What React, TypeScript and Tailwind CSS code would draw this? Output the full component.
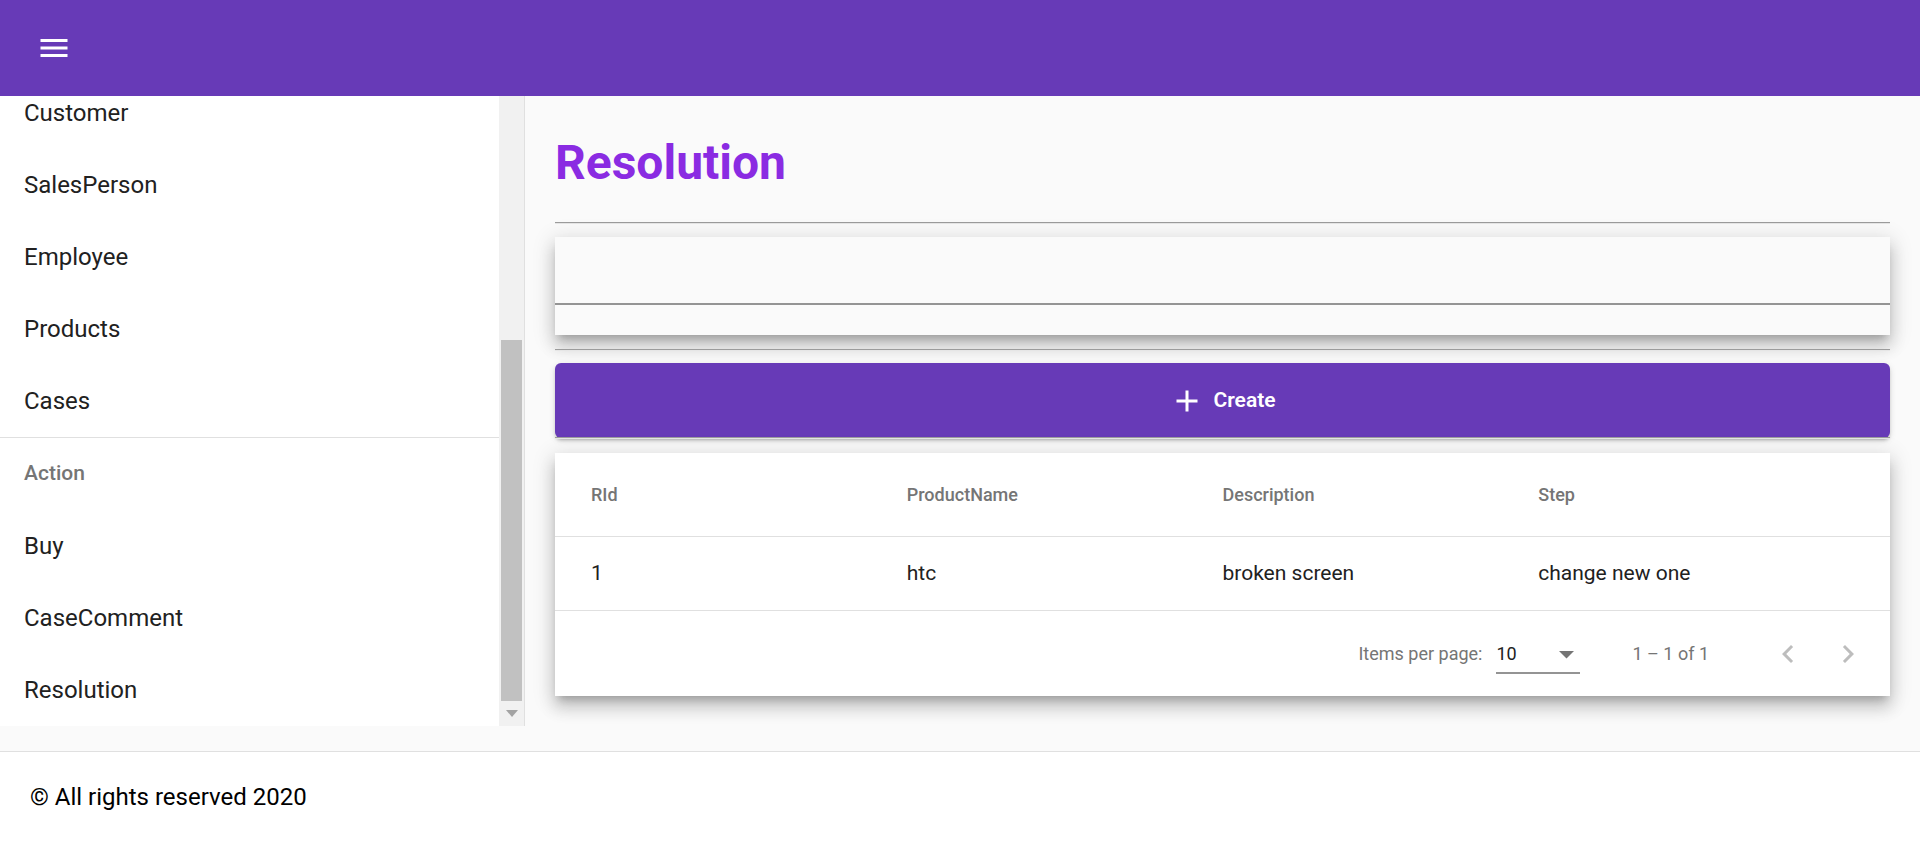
import React from "react";

const navTop = ["Customer", "SalesPerson", "Employee", "Products", "Cases"];
const navAction = ["Buy", "CaseComment", "Resolution"];

function Hr() {
  return <div className="h-[2px] border-t border-b border-t-[#9c9c9c] border-b-[#e6e6e6]" />;
}

export default function App() {
  return (
    <div className="w-[1920px] h-[841px] overflow-hidden bg-[#fafafa] flex flex-col" style={{ fontFamily: "Roboto, 'Noto Sans', sans-serif" }}>
      {/* Toolbar */}
      <div className="h-[96px] shrink-0 bg-[#673ab7] flex items-center pl-[36px]">
        <svg width="36" height="36" viewBox="0 0 24 24" fill="#ffffff">
          <path d="M3 18h18v-2H3v2zm0-5h18v-2H3v2zm0-7v2h18V6H3z" />
        </svg>
      </div>

      {/* Main */}
      <div className="h-[630px] shrink-0 flex">
        {/* Sidenav */}
        <div className="w-[525px] shrink-0 flex border-r border-[#e0e0e0] bg-white">
          <div className="w-[499px] overflow-hidden">
            <div className="-mt-[19px]">
              {navTop.map((t) => (
                <div key={t} className="h-[72px] flex items-center pl-[24px] text-[24px] text-[#212121]">
                  {t}
                </div>
              ))}
              <div className="border-t border-[#e0e0e0]" />
              <div className="h-[72px] flex items-center pl-[24px] text-[21px] font-medium text-[#757575]">Action</div>
              {navAction.map((t) => (
                <div key={t} className="h-[72px] flex items-center pl-[24px] text-[24px] text-[#212121]">
                  {t}
                </div>
              ))}
            </div>
          </div>
          {/* scrollbar */}
          <div className="w-[25px] bg-[#f1f1f1] flex flex-col">
            <div className="h-[244px]" />
            <div className="h-[361px] ml-[2px] w-[21px] bg-[#c1c1c1]" />
            <div className="flex-1 flex items-start justify-center pt-[9px]">
              <svg width="12" height="7" viewBox="0 0 12 7">
                <path d="M0 0h12L6 7z" fill="#a3a3a3" />
              </svg>
            </div>
          </div>
        </div>

        {/* Content */}
        <div className="flex-1 bg-[#fafafa] px-[30px]">
          <h1 className="mt-[39px] h-[56px] leading-[56px] text-[48px] font-bold text-[#8a2be2]">Resolution</h1>
          <div className="mt-[31px]">
            <Hr />
          </div>
          {/* filter card */}
          <div className="mt-[13px] h-[98px] bg-[#fafafa] shadow-[0_7px_8px_-4px_rgba(0,0,0,0.2),0_12px_15px_1px_rgba(0,0,0,0.14),0_4px_20px_3px_rgba(0,0,0,0.12)] flex flex-col">
            <div className="h-[68px] border-b-2 border-[#949494]" />
          </div>
          <div className="mt-[14px]">
            <Hr />
          </div>
          {/* create button */}
          <div className="mt-[12px] h-[75px] rounded-[6px] bg-[#673ab7] shadow-[0_4px_2px_-3px_rgba(0,0,0,0.2),0_3px_3px_0_rgba(0,0,0,0.14),0_2px_7px_0_rgba(0,0,0,0.12)] flex items-center justify-center text-white">
            <svg width="36" height="36" viewBox="0 0 24 24" fill="#ffffff">
              <path d="M19 13h-6v6h-2v-6H5v-2h6V5h2v6h6v2z" />
            </svg>
            <span className="ml-[8px] text-[21px] font-semibold">Create</span>
          </div>
          <div className="-mt-[1px]">
            <Hr />
          </div>
          {/* table card */}
          <div className="mt-[14px] bg-white shadow-[0_7px_8px_-4px_rgba(0,0,0,0.2),0_12px_15px_1px_rgba(0,0,0,0.14),0_4px_20px_3px_rgba(0,0,0,0.12)]">
            <div className="h-[84px] border-b border-[#e0e0e0] grid grid-cols-4 px-[36px] items-center text-[18px] font-medium text-[#757575]">
              <div>RId</div>
              <div>ProductName</div>
              <div>Description</div>
              <div>Step</div>
            </div>
            <div className="h-[74px] border-b border-[#e0e0e0] grid grid-cols-4 px-[36px] items-center text-[21px] text-[#212121]">
              <div>1</div>
              <div>htc</div>
              <div>broken screen</div>
              <div>change new one</div>
            </div>
            <div className="h-[85px] flex items-center justify-end pr-[12px] text-[18px] text-[#757575]">
              <span>Items per page:</span>
              <div className="ml-[14px] w-[84px] h-[40px] relative flex items-center">
                <span className="text-[#212121]">10</span>
                <svg className="absolute right-[6px] top-[17px]" width="15" height="8" viewBox="0 0 15 8">
                  <path d="M0 0h15L7.5 7.5z" fill="#757575" />
                </svg>
                <div className="absolute left-0 right-0 bottom-[0px] h-[2px] bg-[#949494]" />
              </div>
              <span className="ml-[52px]">1 – 1 of 1</span>
              <div className="ml-[49px] w-[60px] h-[60px] flex items-center justify-center">
                <svg width="36" height="36" viewBox="0 0 24 24" fill="rgba(0,0,0,0.26)">
                  <path d="M15.41 7.41L14 6l-6 6 6 6 1.41-1.41L10.83 12z" />
                </svg>
              </div>
              <div className="w-[60px] h-[60px] flex items-center justify-center">
                <svg width="36" height="36" viewBox="0 0 24 24" fill="rgba(0,0,0,0.26)">
                  <path d="M10 6L8.59 7.41 13.17 12l-4.58 4.59L10 18l6-6z" />
                </svg>
              </div>
            </div>
          </div>
        </div>
      </div>

      {/* spacer */}
      <div className="h-[26px] shrink-0 bg-[#fafafa] border-b border-[#e0e0e0]" />

      {/* footer */}
      <div className="flex-1 bg-white flex items-center pl-[30px] text-[24px] text-black">
        © All rights reserved 2020
      </div>
    </div>
  );
}
